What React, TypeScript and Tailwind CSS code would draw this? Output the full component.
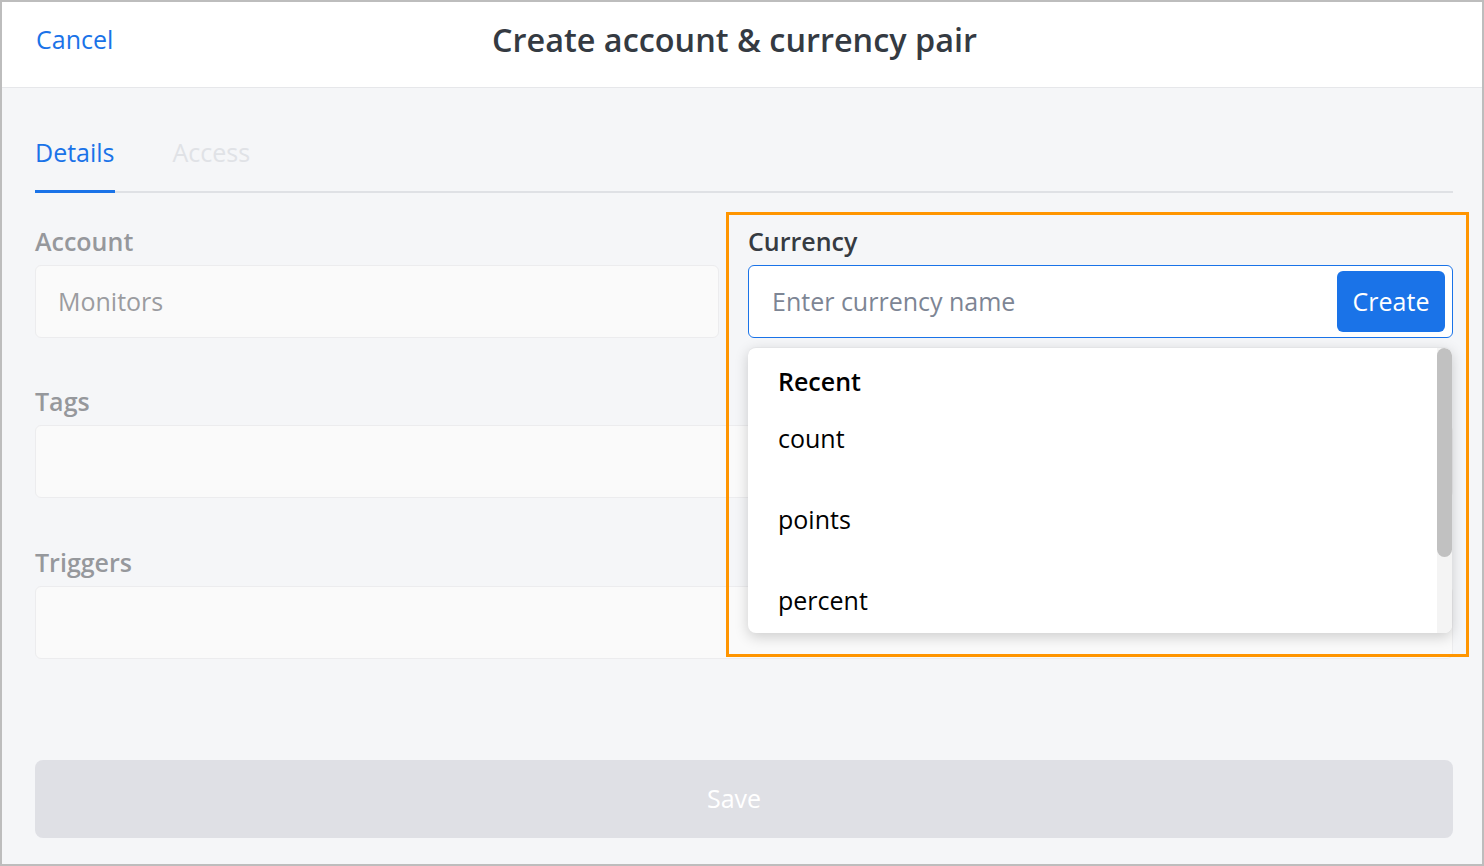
const recent = ["count", "points", "percent"]

const Field = ({ label, className = "" }: { label: string; className?: string }) => (
  <div className={className}>
    <p className="text-[25px] leading-[32px] font-semibold text-[#96989c]">{label}</p>
    <div className="mt-2 h-[73px] rounded-md border border-[#ececee] bg-[#fafafa]" />
  </div>
)

const App = () => {
  return (
    <div
      className="relative flex h-[866px] w-[1484px] flex-col border-2 border-[#bdbdbd] bg-[#f5f6f8]"
      style={{ fontFamily: '"Open Sans", "Noto Sans", sans-serif' }}
    >
      {/* header */}
      <div className="flex h-[86px] shrink-0 items-center border-b border-[#e6e7ea] bg-white px-[34px] pb-[10px]">
        <div className="w-[456px] text-[25px] text-[#1a73e8]">Cancel</div>
        <h1 className="text-[32.4px] font-semibold text-[#343a42]">Create account &amp; currency pair</h1>
      </div>

      <div className="flex flex-col pr-[29px] pl-[33px]">
        {/* tabs */}
        <div className="flex gap-[58px] border-b-2 border-[#dfe1e5]">
          <div className="-mb-[2px] border-b-[3px] border-[#1a73e8] pt-[48px] pb-[22px] text-[25px] leading-[32px] text-[#1a73e8]">
            Details
          </div>
          <div className="pt-[48px] pb-[22px] text-[25px] leading-[32px] text-[#e0e2e6]">Access</div>
        </div>

        {/* account + currency */}
        <div className="mt-8 grid grid-cols-[684px_1fr] gap-[29px]">
          <div>
            <p className="text-[25px] leading-[32px] font-semibold text-[#96989c]">Account</p>
            <div className="mt-2 flex h-[73px] items-center rounded-md border border-[#ececee] bg-[#fafafa] px-[22px] text-[25px] text-[#9b9ca0]">
              Monitors
            </div>
          </div>

          <div className="relative z-10">
            <p className="text-[25px] leading-[32px] font-semibold text-[#363b42]">Currency</p>
            <div className="mt-2 flex h-[73px] items-center rounded-md border border-[#1a73e8] bg-white pr-[7px] pl-[23px]">
              <span className="flex-1 text-[25px] text-[#7d8594]">Enter currency name</span>
              <button className="h-[61px] w-[108px] rounded-md bg-[#1a73e8] text-[25px] text-white">Create</button>
            </div>

            {/* dropdown */}
            <div className="absolute top-[122px] right-[1px] left-0 flex h-[286px] overflow-hidden rounded-lg border-t border-[#e3e4e6] bg-white shadow-[0_4px_14px_rgba(0,0,0,0.18)]">
              <div className="flex-1 pt-[17px] pl-[30px] text-[25px] text-black">
                <p className="leading-[32px] font-semibold">Recent</p>
                <div className="mt-[25px] flex flex-col gap-[49px]">
                  {recent.map((r) => (
                    <p key={r} className="leading-[32px]">{r}</p>
                  ))}
                </div>
              </div>
              <div className="flex w-[15px] flex-col bg-[#f4f4f4]">
                <div className="h-[209px] rounded-full bg-[#c1c1c1]" />
              </div>
            </div>
          </div>
        </div>

        <Field label="Tags" className="mt-[47px]" />
        <Field label="Triggers" className="mt-[48px]" />

        <button className="mt-[101px] h-[78px] rounded-lg bg-[#dfe0e5] pr-[20px] text-[25px] text-white">Save</button>
      </div>

      {/* highlight annotation */}
      <div className="pointer-events-none absolute top-[210px] left-[724px] z-20 h-[445px] w-[743px] border-[3px] border-[#ff9500]" />
    </div>
  )
}

export default App
